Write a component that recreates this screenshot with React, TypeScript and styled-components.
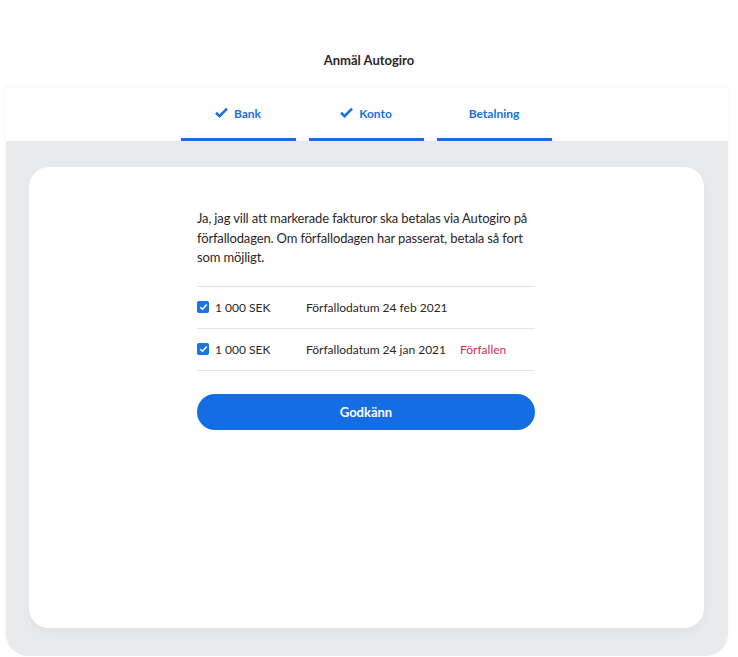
import React from 'react';
import styled, { createGlobalStyle } from 'styled-components';

const GlobalStyle = createGlobalStyle`
  html, body {
    margin: 0;
    padding: 0;
    background: #ffffff;
  }
  body {
    font-family: 'Lato', 'Noto Sans', sans-serif;
    color: #2b2628;
  }
`;

const Page = styled.div`
  width: 738px;
  height: 657px;
  display: flex;
  flex-direction: column;
`;

const Header = styled.header`
  height: 88px;
  display: flex;
  align-items: flex-end;
  justify-content: center;
  padding-bottom: 20px;
  box-sizing: border-box;
`;

const Title = styled.h1`
  margin: 0;
  font-size: 13px;
  font-weight: 700;
  color: #2b2628;
`;

const Panel = styled.section`
  margin: 0 10px 0 6px;
  border-radius: 0 0 22px 22px;
  background: #e9eaec;
  box-shadow: 0 -3px 5px rgba(0, 0, 0, 0.035);
  display: flex;
  flex-direction: column;
`;

const TabBar = styled.nav`
  background: #ffffff;
  height: 53px;
  display: flex;
  justify-content: center;
  gap: 13px;
  padding-right: 2px;
`;

const Tab = styled.div`
  width: 115px;
  box-sizing: border-box;
  border-bottom: 3px solid #1a6fe3;
  display: flex;
  align-items: flex-start;
  justify-content: center;
  gap: 6px;
  padding-top: 18px;
  font-size: 12px;
  font-weight: 700;
  color: #1a6fe3;
`;

const Check = styled.svg`
  width: 13px;
  height: 11px;
  margin-top: 1px;
`;

const Body = styled.div`
  padding: 26px 24px 28px 23px;
`;

const Card = styled.div`
  background: #ffffff;
  border-radius: 20px;
  height: 461px;
  box-shadow: 0 4px 10px rgba(0, 0, 0, 0.04);
  display: flex;
  justify-content: center;
  padding-top: 42px;
  box-sizing: border-box;
`;

const Content = styled.div`
  width: 338px;
  margin-right: 1px;
`;

const Intro = styled.p`
  margin: 0 0 18px;
  font-size: 13px;
  line-height: 19.5px;
  letter-spacing: -0.15px;
  color: #2b2628;
`;

const InvoiceList = styled.ul`
  list-style: none;
  margin: 0;
  padding: 0;
  border-top: 1px solid #e4e4e6;
`;

const Invoice = styled.li`
  height: 41px;
  border-bottom: 1px solid #e4e4e6;
  display: flex;
  align-items: center;
  font-size: 12px;
  color: #2b2628;
`;

const Box = styled.span`
  width: 12px;
  height: 12px;
  border-radius: 2px;
  background: #1a73e8;
  display: inline-flex;
  align-items: center;
  justify-content: center;
  margin-right: 6px;
`;

const Amount = styled.span`
  width: 91px;
`;

const Due = styled.span`
  width: 154px;
`;

const Overdue = styled.span`
  color: #c3305f;
`;

const Approve = styled.button`
  margin-top: 23px;
  width: 100%;
  height: 36px;
  border: none;
  border-radius: 18px;
  background: #156de4;
  color: #ffffff;
  font-family: inherit;
  font-size: 13px;
  font-weight: 700;
`;

const CheckMark = () => (
  <Check viewBox="0 0 13 11">
    <path d="M1 5.8 L4.6 9.2 L12 1.6" fill="none" stroke="#1a6fe3" strokeWidth="2.6" />
  </Check>
);

const BoxTick = () => (
  <svg width="9" height="8" viewBox="0 0 9 8">
    <path d="M1.2 4.2 L3.5 6.3 L7.8 1.6" fill="none" stroke="#fff" strokeWidth="1.5" />
  </svg>
);

const invoices = [
  { amount: '1 000 SEK', due: 'Förfallodatum 24 feb 2021', overdue: false },
  { amount: '1 000 SEK', due: 'Förfallodatum 24 jan 2021', overdue: true },
];

export default function App() {
  return (
    <Page>
      <GlobalStyle />
      <Header>
        <Title>Anmäl Autogiro</Title>
      </Header>
      <Panel>
        <TabBar>
          <Tab><CheckMark />Bank</Tab>
          <Tab><CheckMark />Konto</Tab>
          <Tab>Betalning</Tab>
        </TabBar>
        <Body>
          <Card>
            <Content>
              <Intro>
                Ja, jag vill att markerade fakturor ska betalas via Autogiro på förfallodagen. Om
                förfallodagen har passerat, betala så fort som möjligt.
              </Intro>
              <InvoiceList>
                {invoices.map((inv, i) => (
                  <Invoice key={i}>
                    <Box><BoxTick /></Box>
                    <Amount>{inv.amount}</Amount>
                    <Due>{inv.due}</Due>
                    {inv.overdue && <Overdue>Förfallen</Overdue>}
                  </Invoice>
                ))}
              </InvoiceList>
              <Approve>Godkänn</Approve>
            </Content>
          </Card>
        </Body>
      </Panel>
    </Page>
  );
}
